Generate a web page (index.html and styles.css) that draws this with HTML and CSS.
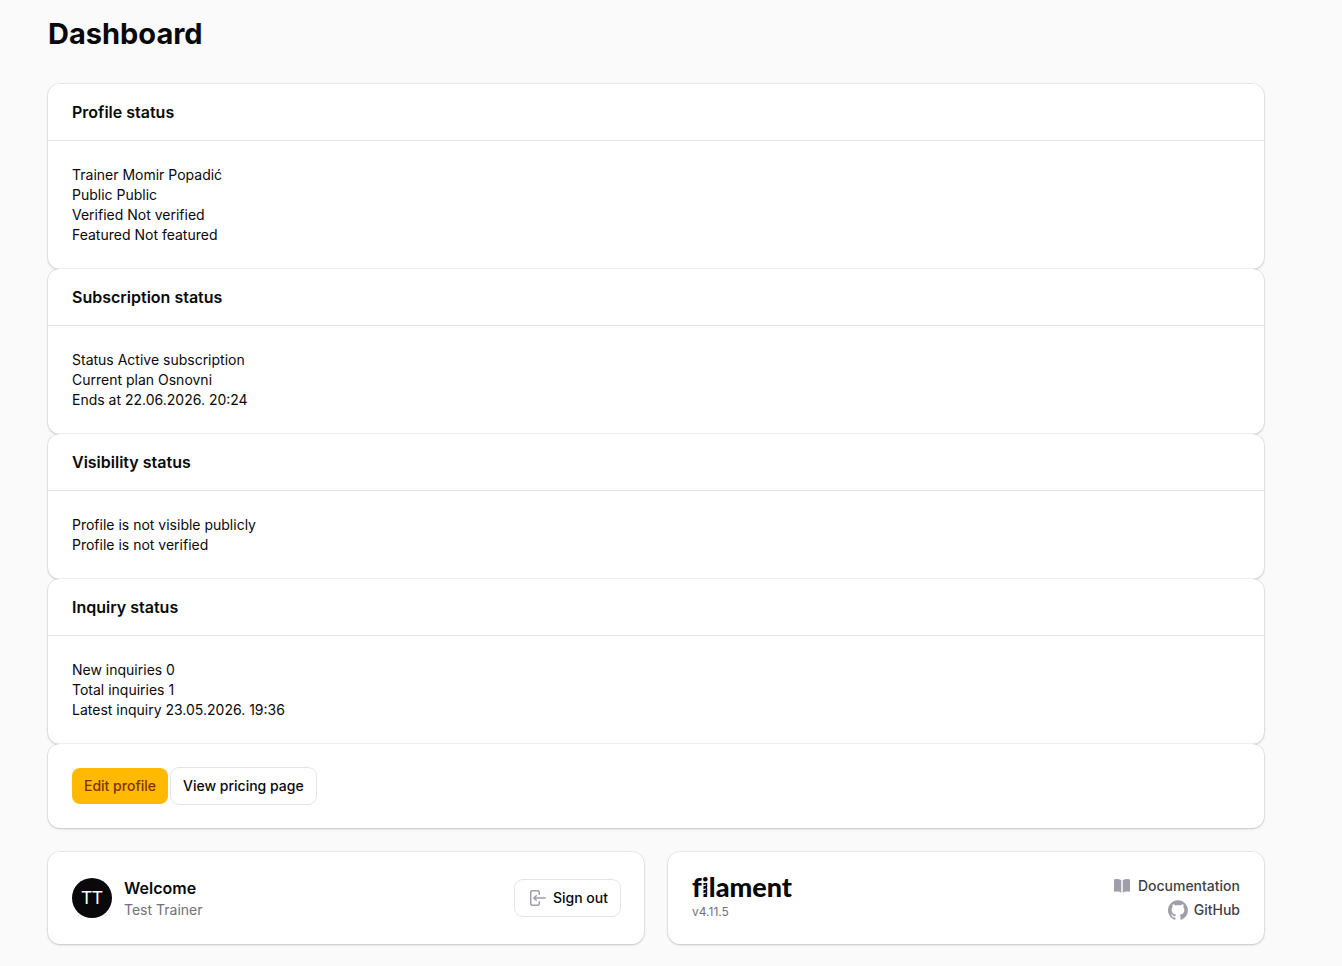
FILE: index.html
```html
<!DOCTYPE html>
<html lang="en">
<head>
    <meta charset="UTF-8">
    <meta name="viewport" content="width=device-width, initial-scale=1.0">
    <title>Dashboard</title>
    <link rel="stylesheet" href="styles.css">
</head>
<body>
    <main class="page">
        <h1 class="page-title">Dashboard</h1>

        <div class="sections">
            <section class="card">
                <h2 class="card-header">Profile status</h2>
                <div class="card-content">
                    <div>Trainer Momir Popadić</div>
                    <div>Public Public</div>
                    <div>Verified Not verified</div>
                    <div>Featured Not featured</div>
                </div>
            </section>

            <section class="card">
                <h2 class="card-header">Subscription status</h2>
                <div class="card-content">
                    <div>Status Active subscription</div>
                    <div>Current plan Osnovni</div>
                    <div>Ends at 22.06.2026. 20:24</div>
                </div>
            </section>

            <section class="card">
                <h2 class="card-header">Visibility status</h2>
                <div class="card-content">
                    <div>Profile is not visible publicly</div>
                    <div>Profile is not verified</div>
                </div>
            </section>

            <section class="card">
                <h2 class="card-header">Inquiry status</h2>
                <div class="card-content">
                    <div>New inquiries 0</div>
                    <div>Total inquiries 1</div>
                    <div>Latest inquiry 23.05.2026. 19:36</div>
                </div>
            </section>

            <section class="card actions">
                <a class="btn btn-primary" href="#">Edit profile</a>
                <a class="btn" href="#">View pricing page</a>
            </section>
        </div>

        <div class="widgets">
            <section class="card widget">
                <div class="avatar">TT</div>
                <div class="account">
                    <h2>Welcome</h2>
                    <p>Test Trainer</p>
                </div>
                <button type="button" class="btn">
                    <svg class="icon" viewBox="0 0 20 20" fill="currentColor">
                        <path fill-rule="evenodd" d="M3 4.25A2.25 2.25 0 0 1 5.25 2h5.5A2.25 2.25 0 0 1 13 4.25v2a.75.75 0 0 1-1.5 0v-2a.75.75 0 0 0-.75-.75h-5.5a.75.75 0 0 0-.75.75v11.5c0 .414.336.75.75.75h5.5a.75.75 0 0 0 .75-.75v-2a.75.75 0 0 1 1.5 0v2A2.25 2.25 0 0 1 10.75 18h-5.5A2.25 2.25 0 0 1 3 15.75V4.25Z"/>
                        <path fill-rule="evenodd" d="M19 10a.75.75 0 0 0-.75-.75H8.704l1.048-.943a.75.75 0 1 0-1.004-1.114l-2.5 2.25a.75.75 0 0 0 0 1.114l2.5 2.25a.75.75 0 1 0 1.004-1.114l-1.048-.943h9.546A.75.75 0 0 0 19 10Z"/>
                    </svg>
                    Sign out
                </button>
            </section>

            <section class="card widget">
                <div class="brand">
                    <a class="logo" href="#">f<span class="thread">i<svg viewBox="0 0 8 32" fill="none" stroke="#fff"><path d="M0 16l4-1M0 20l4-1M0 24l4-1M8 17l-3 1M8 21l-3 1M8 25l-3 1"/></svg></span>lament</a>
                    <p>v4.11.5</p>
                </div>
                <nav class="links">
                    <a href="#">
                        <svg class="icon" viewBox="0 0 20 20" fill="currentColor">
                            <path d="M10.75 16.82A7.462 7.462 0 0 1 15 15.5c.71 0 1.396.098 2.046.282A.75.75 0 0 0 18 15.06v-11a.75.75 0 0 0-.546-.721A9.006 9.006 0 0 0 15 3a8.963 8.963 0 0 0-4.25 1.065V16.82ZM9.25 4.065A8.963 8.963 0 0 0 5 3c-.85 0-1.673.118-2.454.339A.75.75 0 0 0 2 4.06v11a.75.75 0 0 0 .954.721A7.506 7.506 0 0 1 5 15.5c1.579 0 3.042.487 4.25 1.32V4.065Z"/>
                        </svg>
                        Documentation
                    </a>
                    <a href="#">
                        <svg class="icon" viewBox="0 0 98 96" fill="currentColor">
                            <path fill-rule="evenodd" d="M48.854 0C21.839 0 0 22 0 49.217c0 21.756 13.993 40.172 33.405 46.69 2.427.49 3.316-1.059 3.316-2.362 0-1.141-.08-5.052-.08-9.127-13.59 2.934-16.42-5.867-16.42-5.867-2.184-5.704-5.42-7.17-5.42-7.17-4.448-3.015.324-3.015.324-3.015 4.934.326 7.523 5.052 7.523 5.052 4.367 7.496 11.404 5.378 14.235 4.074.404-3.178 1.699-5.378 3.074-6.6-10.839-1.141-22.243-5.378-22.243-24.283 0-5.378 1.94-9.778 5.014-13.2-.485-1.222-2.184-6.275.486-13.038 0 0 4.125-1.304 13.426 5.052a46.97 46.97 0 0 1 12.214-1.63c4.125 0 8.33.571 12.213 1.63 9.302-6.356 13.427-5.052 13.427-5.052 2.67 6.763.97 11.816.485 13.038 3.155 3.422 5.015 7.822 5.015 13.2 0 18.905-11.404 23.06-22.324 24.283 1.78 1.548 3.316 4.481 3.316 9.126 0 6.6-.08 11.897-.08 13.526 0 1.304.89 2.853 3.316 2.364 19.412-6.52 33.405-24.935 33.405-46.691C97.707 22 75.788 0 48.854 0z"/>
                        </svg>
                        GitHub
                    </a>
                </nav>
            </section>
        </div>
    </main>
</body>
</html>
```

FILE: styles.css
```css
* {
    box-sizing: border-box;
}

body {
    margin: 0;
    background-color: #fafafa;
    color: #09090b;
    font-family: Inter, "Liberation Sans", sans-serif;
    font-size: 14px;
    line-height: 20px;
}

h1, h2, p {
    margin: 0;
}

a {
    color: inherit;
    text-decoration: none;
}

.page {
    padding: 16px 78px 22px 48px;
}

.page-title {
    margin-bottom: 32px;
    font-size: 29px;
    font-weight: 700;
    line-height: 36px;
}

/* Cards */
.card {
    background-color: #fff;
    border-radius: 12px;
    box-shadow: 0 0 0 1px rgba(9, 9, 11, 0.05), 0 1px 3px rgba(0, 0, 0, 0.1), 0 1px 2px rgba(0, 0, 0, 0.08);
}

.card-header {
    padding: 16px 24px;
    font-size: 16px;
    font-weight: 600;
    line-height: 24px;
}

.card-content {
    padding: 24px;
    border-top: 1px solid #e4e4e7;
}

.actions {
    display: flex;
    gap: 3px;
    padding: 24px;
}

/* Buttons */
.btn {
    display: inline-flex;
    align-items: center;
    gap: 6px;
    padding: 8px 12px;
    border: 0;
    border-radius: 8px;
    background-color: #fff;
    box-shadow: 0 0 0 1px #e4e4e7;
    color: #09090b;
    font-family: inherit;
    font-size: 14px;
    font-weight: 500;
    line-height: 20px;
    cursor: pointer;
}

.btn-primary {
    background-color: #ffb900;
    box-shadow: none;
    color: #7b3306;
}

.icon {
    width: 20px;
    height: 20px;
    color: #9f9fa9;
}

/* Bottom widgets */
.widgets {
    display: grid;
    grid-template-columns: 1fr 1fr;
    gap: 24px;
    margin-top: 24px;
}

.widget {
    display: flex;
    align-items: center;
    gap: 12px;
    padding: 24px;
}

.avatar {
    width: 40px;
    height: 40px;
    border-radius: 50%;
    background-color: #09090b;
    color: #fff;
    font-family: Roboto, sans-serif;
    font-size: 18px;
    line-height: 40px;
    text-align: center;
}

.account,
.brand {
    flex: 1;
}

.account h2 {
    font-size: 16px;
    font-weight: 600;
    line-height: 24px;
}

.account p {
    color: #71717b;
}

.logo {
    display: block;
    font-family: Lato, sans-serif;
    font-size: 27px;
    font-weight: 900;
    font-variant-ligatures: none;
    line-height: 22px;
}

/* Screw thread cut into the stem of the i */
.thread {
    position: relative;
}

.thread svg {
    position: absolute;
    top: 0;
    left: 0;
    width: 8px;
    height: 32px;
}

.brand p {
    margin-top: 6px;
    color: #71717b;
    font-size: 12px;
    line-height: 16px;
}

.links {
    display: flex;
    flex-direction: column;
    align-items: flex-end;
    gap: 4px;
}

.links a {
    display: flex;
    align-items: center;
    gap: 6px;
    color: #3f3f46;
    font-weight: 500;
}
```
